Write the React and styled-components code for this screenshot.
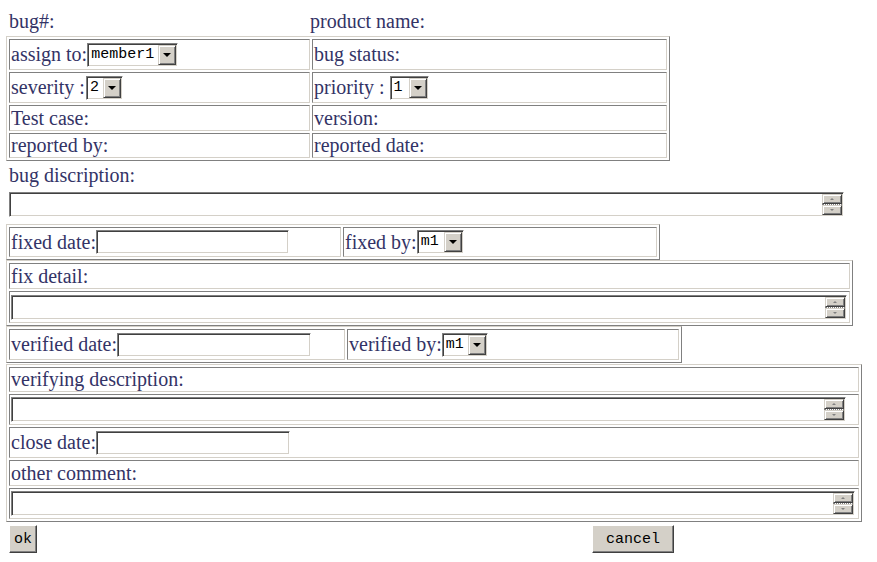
import React from 'react';
import styled, { createGlobalStyle } from 'styled-components';

const GlobalStyle = createGlobalStyle`
  body {
    margin: 0;
    background: #fff;
  }
`;

const Page = styled.div`
  padding: 10px 0 0 6px;
  font-family: "Liberation Serif", "Times New Roman", serif;
  font-size: 20px;
  line-height: 23px;
  color: #333366;
`;

const HeaderRow = styled.div`
  display: grid;
  grid-template-columns: 301px auto;
  height: 23px;
  margin-left: 3px;
`;

const Frame = styled.div`
  box-sizing: border-box;
  width: ${(p) => p.$w}px;
  margin-top: ${(p) => p.$mt || 0}px;
  display: grid;
  grid-template-columns: ${(p) => p.$cols || '1fr'};
  gap: 2px;
  padding: 2px;
  border: 1px solid;
  border-color: #d4d0c8 #808080 #808080 #d4d0c8;
`;

const Cell = styled.div`
  box-sizing: border-box;
  height: ${(p) => p.$h}px;
  display: flex;
  align-items: center;
  padding: 0 1px;
  border: 1px solid;
  border-color: #808080 #d4d0c8 #d4d0c8 #808080;
  white-space: nowrap;
  overflow: hidden;
`;

const Label = styled.div`
  margin: 3px 0 0 3px;
  height: 23px;
`;

const Sunken = styled.div`
  box-sizing: border-box;
  flex: none;
  width: ${(p) => p.$w}px;
  height: ${(p) => p.$h || 24}px;
  margin-top: ${(p) => p.$mt || 0}px;
  margin-left: ${(p) => p.$ml || 0}px;
  display: flex;
  background: #fff;
  border: 1px solid;
  border-color: #808080 #fff #fff #808080;
  box-shadow: inset 1px 1px #404040, inset -1px -1px #d4d0c8;
  padding: 1px;
`;

const SelectValue = styled.div`
  flex: 1;
  padding-left: 2px;
  font-family: "Liberation Mono", "Courier New", monospace;
  font-size: 15px;
  line-height: 20px;
  color: #000;
`;

const Raised = styled.div`
  box-sizing: border-box;
  display: flex;
  align-items: center;
  justify-content: center;
  background: #d4d0c8;
  border: 1px solid;
  border-color: #d4d0c8 #404040 #404040 #d4d0c8;
  box-shadow: inset 1px 1px #fff, inset -1px -1px #808080;
`;

const ArrowBtn = styled(Raised)`
  width: 18px;
  height: 100%;
`;

const DownTri = styled.span`
  width: 0;
  height: 0;
  border-left: ${(p) => p.$s || 4}px solid transparent;
  border-right: ${(p) => p.$s || 4}px solid transparent;
  border-top: ${(p) => p.$s || 4}px solid ${(p) => p.$c || '#000'};
`;

const UpTri = styled.span`
  width: 0;
  height: 0;
  border-left: 2px solid transparent;
  border-right: 2px solid transparent;
  border-bottom: 2px solid #808080;
`;

const ScrollCol = styled.div`
  margin-left: auto;
  width: 20px;
  display: flex;
  flex-direction: column;
`;

const ScrollBtn = styled(Raised)`
  flex: 1;
`;

const Track = styled.div`
  height: 0;
  border-top: 1px dotted #808080;
`;

const ButtonRow = styled.div`
  display: grid;
  grid-template-columns: 583px max-content;
  margin: 3px 0 0 3px;
`;

const Button = styled.button`
  box-sizing: border-box;
  height: 28px;
  padding: 0 ${(p) => p.$px}px;
  font-family: "Liberation Mono", "Courier New", monospace;
  font-size: 15px;
  color: #000;
  background: #d4d0c8;
  border: 1px solid;
  border-color: #fff #404040 #404040 #fff;
  box-shadow: inset -1px -1px #808080;
  justify-self: start;
`;

const Select = ({ w, value, ml }) => (
  <Sunken $w={w} $ml={ml}>
    <SelectValue>{value}</SelectValue>
    <ArrowBtn>
      <DownTri />
    </ArrowBtn>
  </Sunken>
);

const Memo = ({ w, mt, ml }) => (
  <Sunken $w={w} $h={25} $mt={mt} $ml={ml}>
    <ScrollCol>
      <ScrollBtn>
        <UpTri />
      </ScrollBtn>
      <Track />
      <ScrollBtn>
        <DownTri $s={2} $c="#808080" />
      </ScrollBtn>
    </ScrollCol>
  </Sunken>
);

const Input = ({ w }) => <Sunken $w={w} $h={24} />;

export default function App() {
  return (
    <>
      <GlobalStyle />
      <Page>
        <HeaderRow>
          <span>bug#:</span>
          <span>product name:</span>
        </HeaderRow>

        <Frame $w={664} $mt={3} $cols="301px 355px">
          <Cell $h={31}>
            assign to:<Select w={91} value="member1" />
          </Cell>
          <Cell $h={31}>bug status:</Cell>
          <Cell $h={31}>
            severity :<Select w={37} value="2" ml={1} />
          </Cell>
          <Cell $h={31}>
            priority :{'\u00a0'}
            <Select w={39} value="1" />
          </Cell>
          <Cell $h={26}>Test case:</Cell>
          <Cell $h={26}>version:</Cell>
          <Cell $h={25}>reported by:</Cell>
          <Cell $h={25}>reported date:</Cell>
        </Frame>

        <Label>bug discription:</Label>
        <Memo w={835} mt={5} ml={3} />

        <Frame $w={654} $mt={7} $cols="332px 314px">
          <Cell $h={30}>
            fixed date:<Input w={193} />
          </Cell>
          <Cell $h={30}>
            fixed by:<Select w={47} value="m1" />
          </Cell>
        </Frame>

        <Frame $w={847}>
          <Cell $h={26}>fix detail:</Cell>
          <Cell $h={32}>
            <Memo w={836} />
          </Cell>
        </Frame>

        <Frame $w={676} $cols="336px 332px">
          <Cell $h={31}>
            verified date:<Input w={194} />
          </Cell>
          <Cell $h={31}>
            verified by:<Select w={46} value="m1" />
          </Cell>
        </Frame>

        <Frame $w={856} $mt={1}>
          <Cell $h={25}>verifying description:</Cell>
          <Cell $h={31}>
            <Memo w={835} />
          </Cell>
          <Cell $h={31}>
            close date:<Input w={194} />
          </Cell>
          <Cell $h={26}>other comment:</Cell>
          <Cell $h={31}>
            <Memo w={844} />
          </Cell>
        </Frame>

        <ButtonRow>
          <Button $px={4}>ok</Button>
          <Button $px={13}>cancel</Button>
        </ButtonRow>
      </Page>
    </>
  );
}
